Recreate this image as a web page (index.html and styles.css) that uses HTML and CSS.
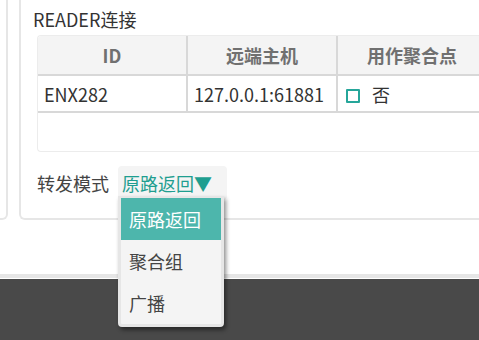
FILE: index.html
```html
<!DOCTYPE html>
<html lang="zh-CN">

<head>
    <meta charset="UTF-8">
    <meta name="viewport" content="width=device-width, initial-scale=1.0">
    <title>READER连接</title>
    <link rel="stylesheet" href="styles.css">
</head>

<body>
    <div class="layout">
        <div class="side"></div>
        <div class="card">
            <h2 class="title">READER连接</h2>
            <div class="table-wrap">
                <table class="readers">
                    <thead>
                        <tr>
                            <th class="col-id">ID</th>
                            <th class="col-host">远端主机</th>
                            <th class="col-agg">用作聚合点</th>
                            <th class="col-rest"></th>
                        </tr>
                    </thead>
                    <tbody>
                        <tr>
                            <td>ENX282</td>
                            <td>127.0.0.1:61881</td>
                            <td><span class="check"></span>否</td>
                            <td></td>
                        </tr>
                    </tbody>
                </table>
            </div>
            <div class="mode-row">
                <span class="mode-label">转发模式</span>
                <div class="select">
                    <span class="select-value">原路返回▼</span>
                    <ul class="menu">
                        <li class="menu-item active">原路返回</li>
                        <li class="menu-item">聚合组</li>
                        <li class="menu-item">广播</li>
                    </ul>
                </div>
            </div>
        </div>
    </div>
    <div class="rule"></div>
    <div class="footer"></div>
</body>

</html>
```

FILE: styles.css
```css
body {
    margin: 0;
    padding: 0;
    background: #fff;
    font-family: "Noto Sans CJK SC", "Noto Sans", sans-serif;
    color: #333;
    overflow: hidden;
    height: 340px;
}

.layout {
    display: flex;
    align-items: flex-start;
    height: 274px;
}

.side {
    width: 8px;
    height: 220px;
    box-sizing: border-box;
    border-right: 2px solid #e6e6e6;
    border-bottom: 2px solid #e6e6e6;
    border-radius: 0 0 6px 0;
    flex-shrink: 0;
}

.card {
    margin-left: 11px;
    flex: 1;
    min-width: 0;
    height: 220px;
    box-sizing: border-box;
    border-left: 2px solid #e6e6e6;
    border-bottom: 2px solid #e6e6e6;
    border-radius: 0 0 0 6px;
    padding: 6px 0 0 16px;
}

.title {
    margin: 0 0 0 -4px;
    font-size: 18px;
    line-height: 26px;
    font-weight: normal;
    color: #333;
}

.table-wrap {
    margin-top: 3px;
    border: 1px solid #ececec;
    border-right: none;
    border-radius: 4px 0 0 4px;
    overflow: hidden;
    height: 117px;
    box-sizing: border-box;
}

.readers {
    border-collapse: separate;
    border-spacing: 0;
    table-layout: fixed;
    width: 700px;
    font-size: 18px;
}

.readers th {
    background: #f4f4f4;
    height: 38px;
    padding: 0;
    font-weight: bold;
    color: #707070;
    text-align: center;
    border-bottom: 2px solid #d8d8d8;
    border-right: 2px solid #d8d8d8;
}

.readers td {
    height: 35px;
    padding: 0 0 0 6px;
    color: #333;
    border-bottom: 2px solid #d8d8d8;
    border-right: 2px solid #d8d8d8;
    white-space: nowrap;
}

.col-id {
    width: 148px;
}

.col-host {
    width: 148px;
}

.col-agg {
    width: 148px;
}

.check {
    display: inline-block;
    width: 14px;
    height: 14px;
    box-sizing: border-box;
    border: 2px solid #26a69a;
    border-radius: 1px;
    margin: 0 12px 0 2px;
    vertical-align: -1px;
}

.mode-row {
    display: flex;
    align-items: center;
    margin-top: 14px;
    gap: 9px;
}

.mode-label {
    font-size: 18px;
    color: #444;
}

.select {
    position: relative;
    background: #f4f4f4;
    border-radius: 4px;
    height: 34px;
    line-height: 34px;
    padding: 0 15px 0 4px;
    font-size: 18px;
    color: #1f9e90;
}

.menu {
    position: absolute;
    left: 0;
    top: 30px;
    margin: 0;
    padding: 0;
    list-style: none;
    width: 106px;
    box-sizing: border-box;
    background: #f4f4f4;
    border: 3px solid #e6e6e6;
    border-top-width: 2px;
    border-radius: 0 0 4px 4px;
    box-shadow: 2px 3px 4px rgba(0, 0, 0, 0.45);
    z-index: 10;
}

.menu-item {
    height: 42px;
    line-height: 42px;
    padding-left: 8px;
    color: #444;
}

.menu-item.active {
    background: #4db6ac;
    color: #fff;
}

.rule {
    height: 4px;
    background: #e6e6e6;
    border-bottom: 1px solid #fff;
}

.footer {
    height: 61px;
    background: #494949;
}
```
